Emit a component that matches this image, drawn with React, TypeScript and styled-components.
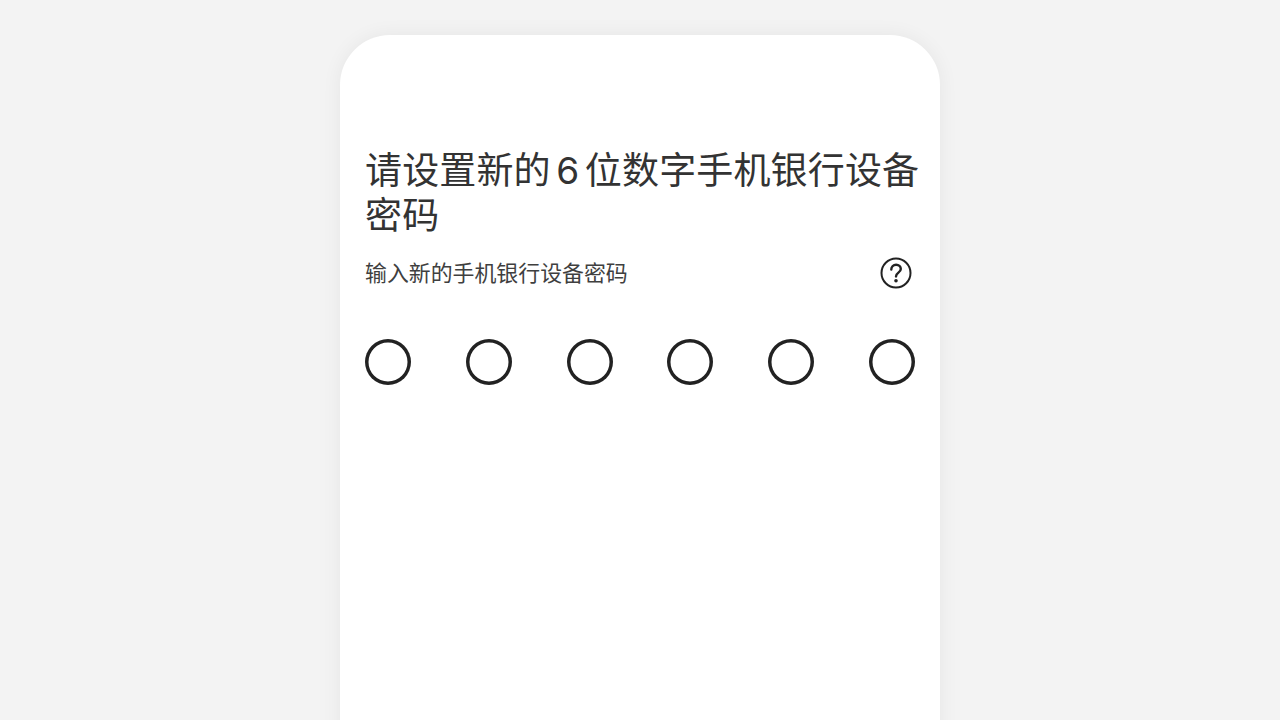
import React from 'react';
import styled, { createGlobalStyle } from 'styled-components';

const GlobalStyle = createGlobalStyle`
  html, body {
    margin: 0;
    height: 100%;
    overflow: hidden;
    background: #f3f3f3;
  }
`;

const Page = styled.div`
  height: 720px;
  overflow: hidden;
  display: flex;
  justify-content: center;
  padding-top: 35px;
  box-sizing: border-box;
  font-family: 'Inter', 'Noto Sans CJK SC', sans-serif;
`;

const Phone = styled.main`
  width: 600px;
  height: 760px;
  flex: none;
  box-sizing: border-box;
  padding: 113px 15px 0 25px;
  background: #fff;
  border-radius: 50px;
  box-shadow: 0 0 20px rgba(0, 0, 0, 0.06);
`;

const Title = styled.h1`
  margin: 0;
  font-size: 37px;
  line-height: 45px;
  font-weight: 400;
  letter-spacing: 0.15px;
  color: #333;
`;

const Digit = styled.span`
  margin: 0 5.5px;
`;

const HintRow = styled.div`
  display: flex;
  align-items: center;
  justify-content: space-between;
  margin-top: 8px;
  padding-right: 12px;
  height: 50px;
`;

const Hint = styled.span`
  font-size: 21.9px;
  color: #3f3f3f;
`;

const HelpIcon = styled.svg`
  width: 34px;
  height: 34px;
  margin-top: 4px;
`;

const Dots = styled.div`
  display: flex;
  justify-content: space-between;
  width: 550px;
  margin-top: 43px;
`;

const Dot = styled.span`
  width: 46px;
  height: 46px;
  border-radius: 50%;
  box-shadow: inset 0 0 0 3.5px #222;
`;

export default function App() {
  return (
    <>
      <GlobalStyle />
      <Page>
        <Phone>
          <Title>
            请设置新的<Digit>6</Digit>位数字手机银行设备
            <br />
            密码
          </Title>
          <HintRow>
            <Hint>输入新的手机银行设备密码</Hint>
            <HelpIcon viewBox="0 0 34 34" fill="none" stroke="#222" strokeWidth="2">
              <circle cx="17" cy="17" r="14.5" />
              <path d="M12.3 13.6c0-3 2.1-4.8 4.8-4.8s4.7 1.8 4.7 4.2c0 3.7-4.8 3.6-4.8 7.4" strokeLinecap="round" strokeWidth="2.4" />
              <circle cx="17" cy="24.8" r="1.8" fill="#222" stroke="none" />
            </HelpIcon>
          </HintRow>
          <Dots>
            {[0, 1, 2, 3, 4, 5].map((i) => (
              <Dot key={i} />
            ))}
          </Dots>
        </Phone>
      </Page>
    </>
  );
}
